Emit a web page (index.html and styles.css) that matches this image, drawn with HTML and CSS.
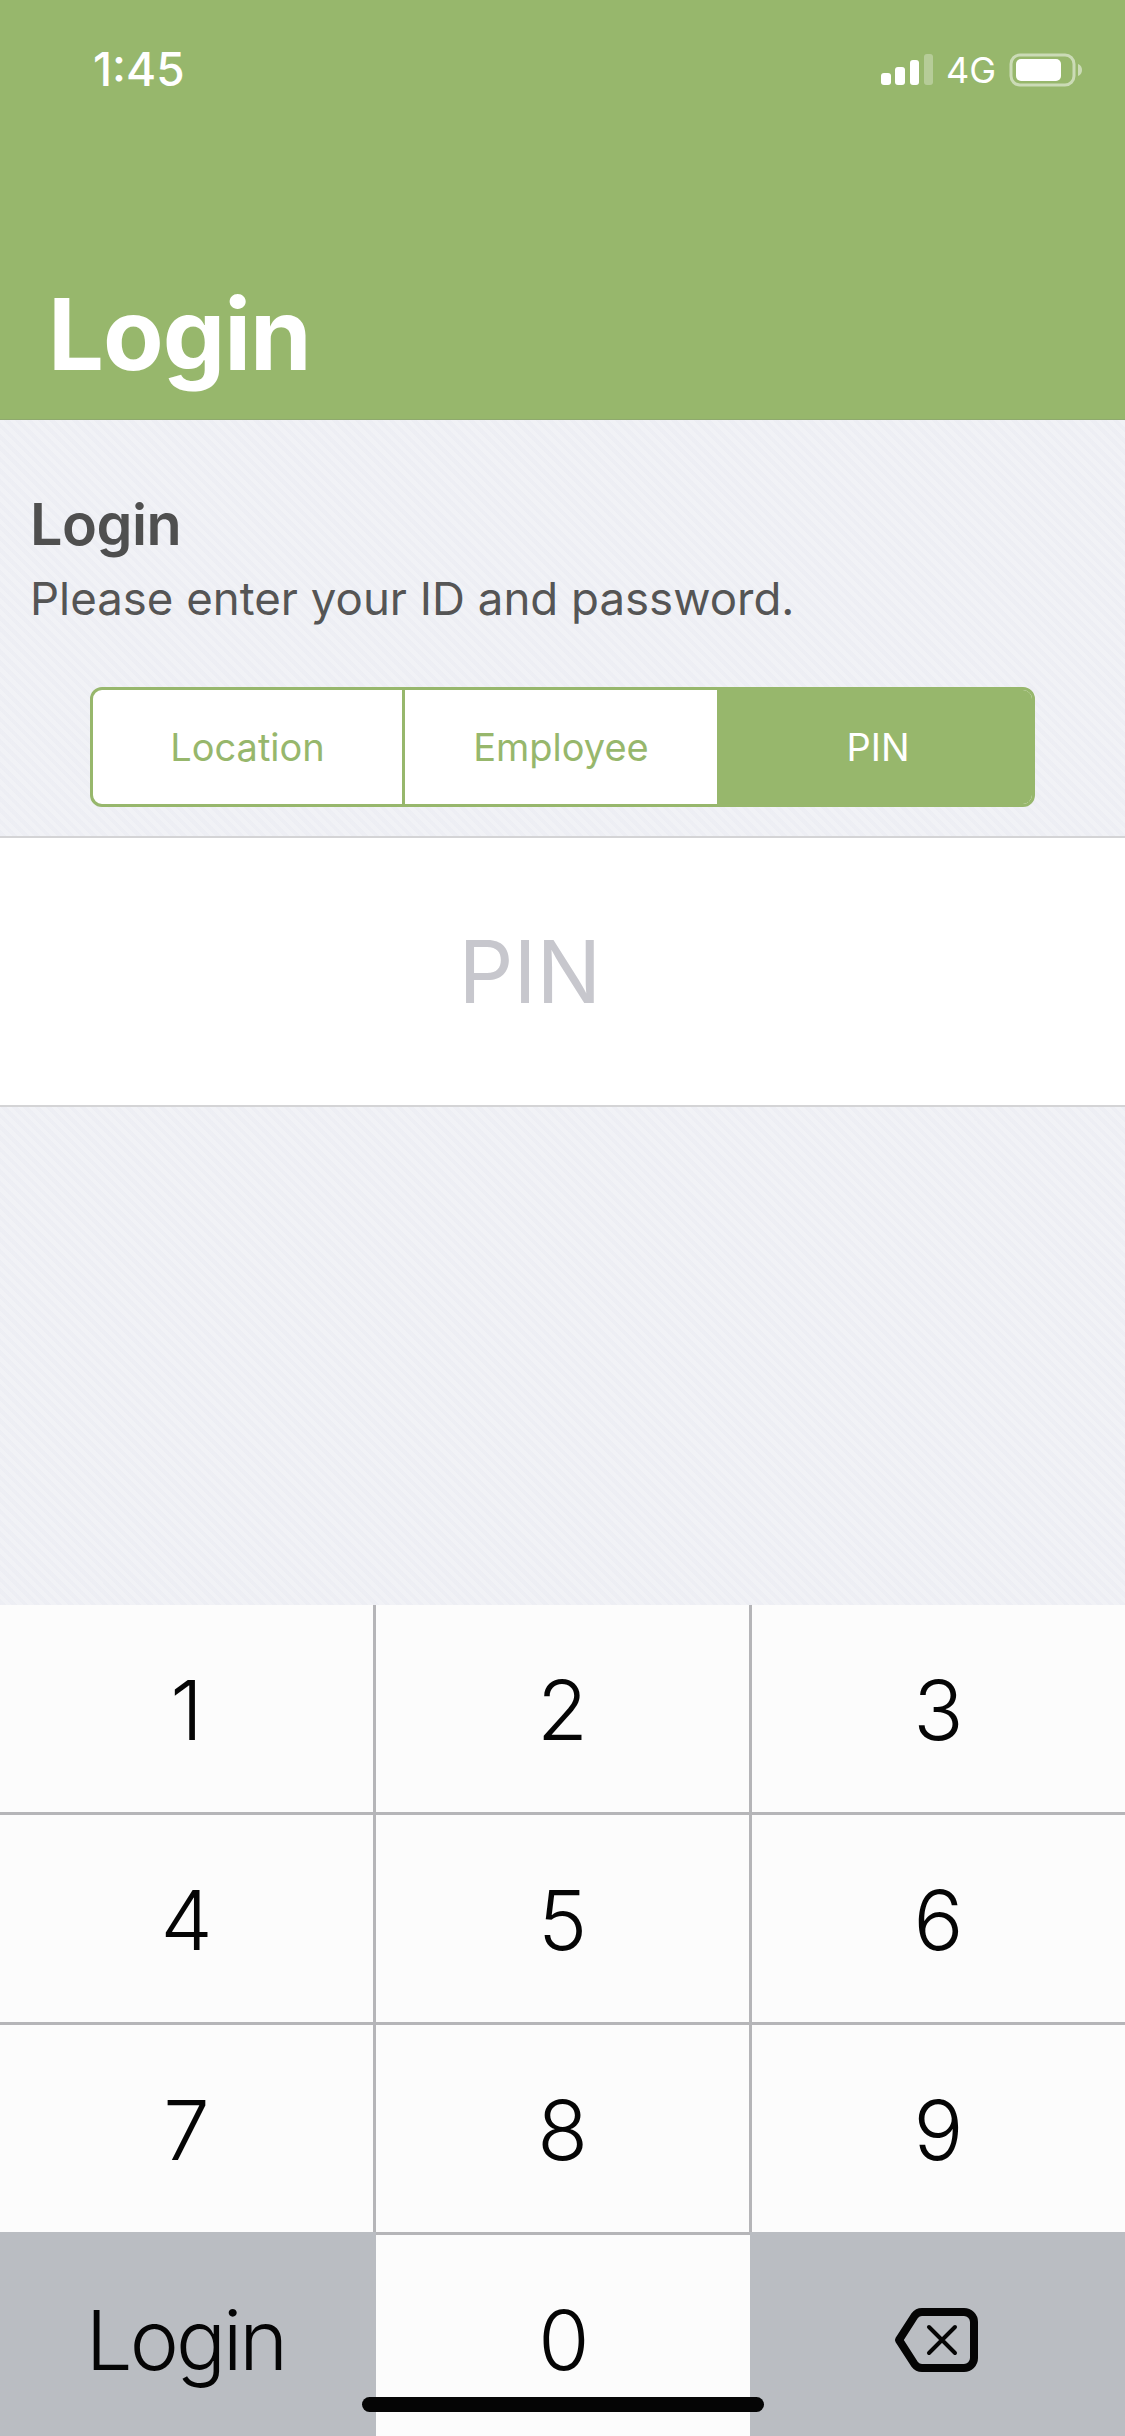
FILE: index.html
```html
<!DOCTYPE html>
<html lang="en">

<head>
    <meta charset="UTF-8">
    <meta name="viewport" content="width=device-width, initial-scale=1.0">
    <title>Login</title>
    <link rel="stylesheet" href="styles.css">
</head>

<body>
    <header class="header">
        <div class="status-bar">
            <span class="status-time">1:45</span>
            <div class="status-icons">
                <svg class="signal" width="52" height="32" viewBox="0 0 52 32">
                    <rect x="0" y="19" width="10" height="12" rx="3" fill="#fff"/>
                    <rect x="14" y="13" width="10" height="18" rx="3" fill="#fff"/>
                    <rect x="29" y="6" width="9" height="25" rx="3" fill="#fff"/>
                    <rect x="43" y="0" width="9" height="31" rx="3" fill="#fff" opacity="0.3"/>
                </svg>
                <span class="status-net">4G</span>
                <svg class="battery" width="74" height="34" viewBox="0 0 74 34">
                    <rect x="2" y="2" width="63" height="30" rx="9" fill="none" stroke="#fff" stroke-opacity="0.5" stroke-width="3"/>
                    <rect x="7" y="6" width="45" height="22" rx="5" fill="#fff"/>
                    <path d="M69 11c3 1 4 3.500 4 6s-1 5-4 6z" fill="#fff" fill-opacity="0.5"/>
                </svg>
            </div>
        </div>
        <h1 class="header-title">Login</h1>
    </header>

    <main class="content">
        <section class="intro">
            <h2 class="intro-title">Login</h2>
            <p class="intro-text">Please enter your ID and password.</p>
            <div class="segments">
                <button class="segment segment-first">Location</button>
                <button class="segment segment-second">Employee</button>
                <button class="segment segment-active">PIN</button>
            </div>
        </section>

        <div class="pin-field">
            <input class="pin-input" type="password" placeholder="PIN">
        </div>
    </main>

    <div class="keyboard">
        <div class="key">1</div>
        <div class="key">2</div>
        <div class="key key-end">3</div>
        <div class="key">4</div>
        <div class="key">5</div>
        <div class="key key-end">6</div>
        <div class="key">7</div>
        <div class="key">8</div>
        <div class="key key-end">9</div>
        <div class="key key-func key-login">Login</div>
        <div class="key key-zero">0</div>
        <div class="key key-func key-delete">
            <svg width="84" height="64" viewBox="0 0 84 64">
                <path d="M28 4h42c5.500 0 10 4.500 10 10v36c0 5.500-4.500 10-10 10H28c-3 0-5.500-1.300-7.300-3.700L5 32 20.700 7.700C22.500 5.300 25 4 28 4z" fill="none" stroke="#050505" stroke-width="8" stroke-linejoin="round"/>
                <path d="M35 19l26 26M61 19L35 45" fill="none" stroke="#050505" stroke-width="4" stroke-linecap="round"/>
            </svg>
        </div>
    </div>

    <div class="home-indicator"></div>
</body>

</html>
```

FILE: styles.css
```css
* {
    box-sizing: border-box;
}

body {
    position: relative;
    display: flex;
    flex-direction: column;
    width: 1125px;
    height: 2436px;
    margin: 0;
    overflow: hidden;
    font-family: Inter, 'Noto Sans', sans-serif;
    background-color: #eff0f5;
    background-image: repeating-linear-gradient(45deg, rgba(255, 255, 255, 0.12) 0, rgba(255, 255, 255, 0.12) 4px, rgba(225, 226, 236, 0.12) 4px, rgba(225, 226, 236, 0.12) 8px);
}

.header {
    display: flex;
    flex-direction: column;
    justify-content: space-between;
    height: 420px;
    padding: 49px 42px 25px 48px;
    background-color: #97b76c;
    border-bottom: 1px solid #8fa96f;
}

.status-bar {
    display: flex;
    justify-content: space-between;
    align-items: center;
    padding-left: 45px;
    color: #fff;
}

.status-time {
    font-size: 46px;
    font-weight: 500;
    line-height: 40px;
}

.status-icons {
    display: flex;
    align-items: center;
    gap: 13px;
    margin-top: 2px;
}

.status-net {
    font-size: 36px;
    line-height: 34px;
}

.signal {
    display: block;
}

.battery {
    display: block;
}

.header-title {
    margin: 0;
    color: #fff;
    font-size: 99px;
    font-weight: 700;
    line-height: 120px;
    letter-spacing: -1px;
}

.content {
    flex: 1;
}

.intro {
    height: 418px;
    padding: 71px 0 0 30px;
    border-bottom: 2px solid #d4d4d6;
}

.intro-title {
    margin: 0;
    color: #4f4f4f;
    font-size: 57.5px;
    font-weight: 600;
    line-height: 66px;
    letter-spacing: -0.5px;
}

.intro-text {
    margin: 13px 0 0;
    color: #555;
    font-size: 45.6px;
    font-weight: 400;
    line-height: 58px;
}

.segments {
    display: flex;
    width: 945px;
    height: 120px;
    margin: 59px 0 0 60px;
    background-color: #fff;
    border: 3px solid #97b76c;
    border-radius: 12px;
    overflow: hidden;
}

.segment {
    padding: 0;
    color: #97b76c;
    font-family: inherit;
    font-size: 38px;
    background: none;
    border: 0;
    border-right: 3px solid #97b76c;
}

.segment-first {
    width: 312px;
}

.segment-second {
    width: 315px;
}

.segment-active {
    width: 312px;
    padding-left: 4px;
    color: #fff;
    background-color: #97b76c;
    border-right: 0;
}

.pin-field {
    height: 269px;
    background-color: #fff;
    border-bottom: 2px solid #d4d4d6;
}

.pin-input {
    display: block;
    width: 100%;
    height: 100%;
    padding: 0 65px 0 0;
    font-family: inherit;
    font-size: 86px;
    font-weight: 400;
    text-align: center;
    background: none;
    border: 0;
    outline: none;
}

.pin-input::placeholder {
    color: #c7c7cd;
    opacity: 1;
}

.keyboard {
    display: grid;
    grid-template-columns: 376px 376px 373px;
    grid-template-rows: 210px 210px 210px 201px;
}

.key {
    display: flex;
    justify-content: center;
    align-items: center;
    padding-top: 2px;
    color: #050505;
    font-size: 83px;
    font-weight: 300;
    background-color: #fcfcfc;
    border-right: 3px solid #b5b5b8;
    border-bottom: 3px solid #b5b5b8;
}

.key-end {
    border-right: 0;
}

.key-zero {
    padding: 8px 0 0;
    border: 0;
}

.key-func {
    margin-top: -3px;
    padding-top: 12px;
    background-color: #babdc2;
    border: 0;
}

.key-login {
    padding-right: 5px;
    letter-spacing: -3px;
}

.key-delete {
    margin-left: -2px;
    padding-right: 4px;
}

.home-indicator {
    position: absolute;
    left: 362px;
    bottom: 24px;
    width: 402px;
    height: 15px;
    background-color: #050505;
    border-radius: 8px;
}
```
